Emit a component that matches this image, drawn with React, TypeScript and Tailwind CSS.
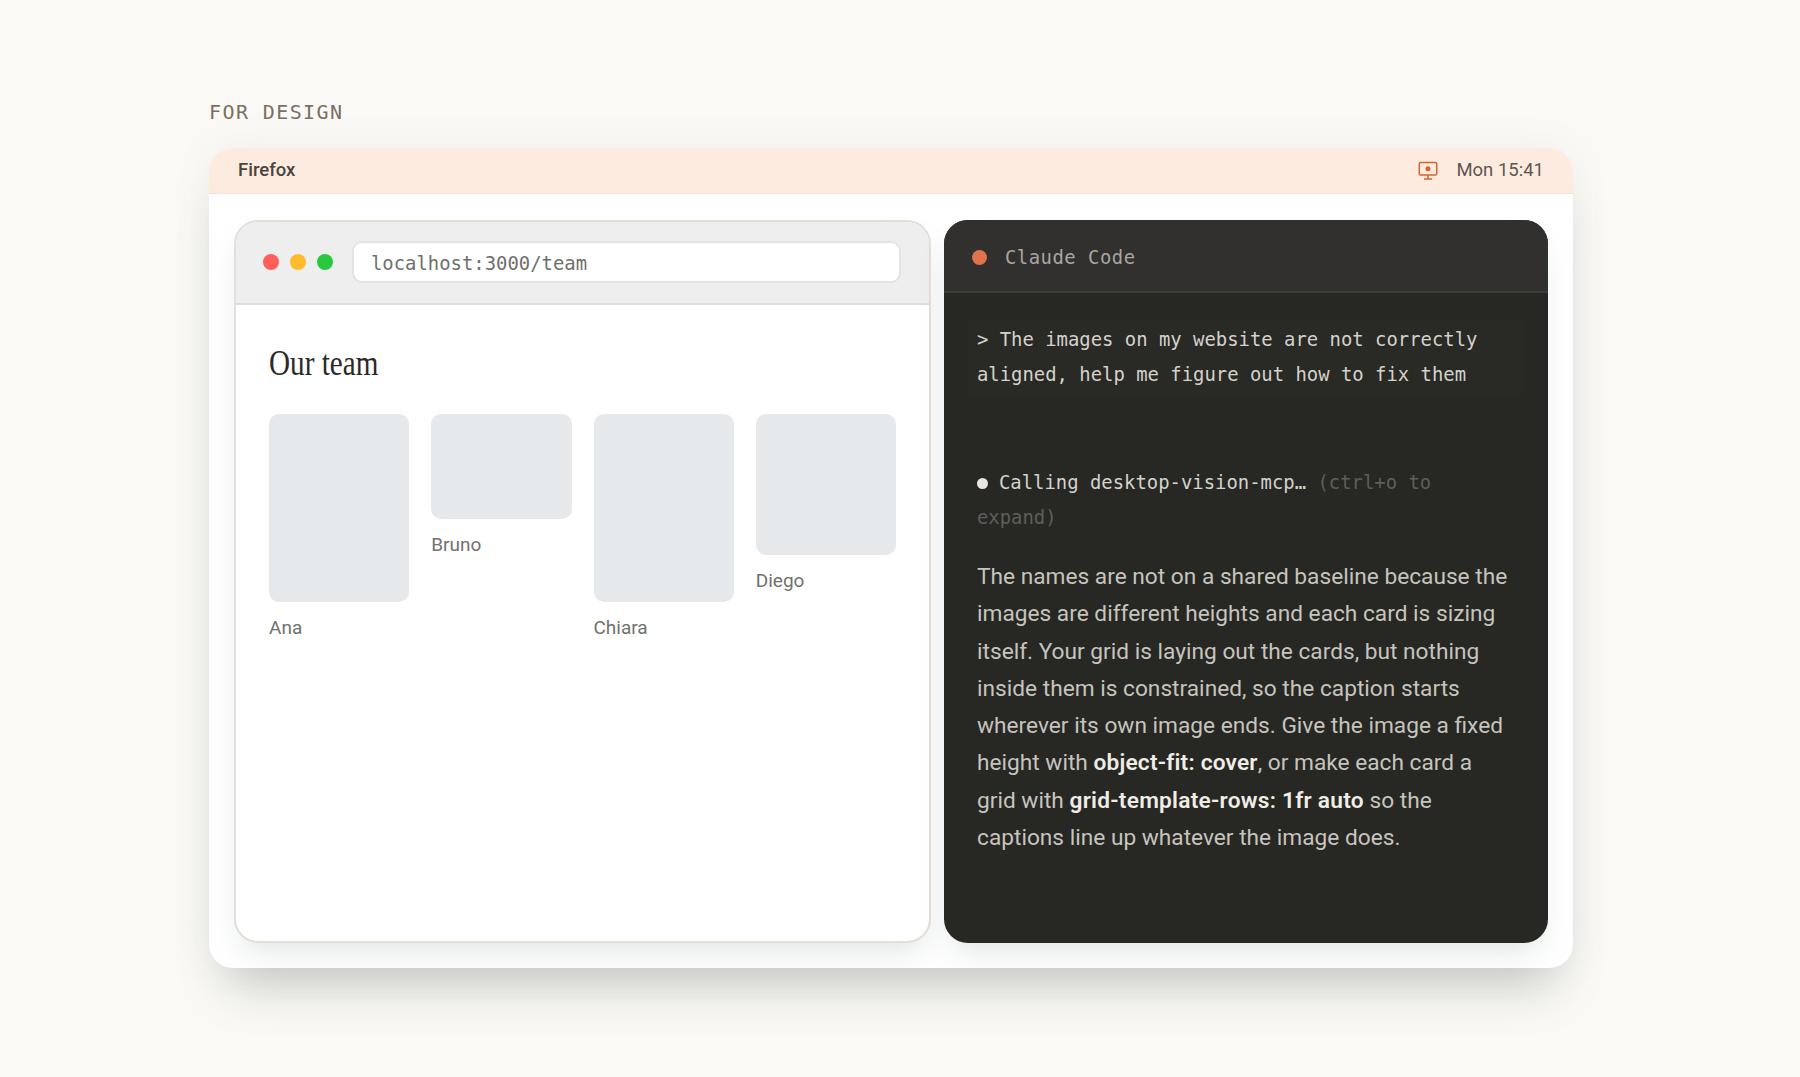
import React from 'react';

const mono = "font-['DejaVu_Sans_Mono','Liberation_Mono',monospace]";

const people = [
  { name: 'Ana', imageHeight: 'h-[188px]' },
  { name: 'Bruno', imageHeight: 'h-[105px]' },
  { name: 'Chiara', imageHeight: 'h-[188px]' },
  { name: 'Diego', imageHeight: 'h-[141px]' },
];

const ScreenShareIcon = () => (
  <svg width="20" height="20" viewBox="0 0 20 20" fill="none" stroke="#d9622b" strokeWidth="1.5">
    <rect x="1.25" y="1.5" width="17.5" height="12.5" rx="1.5" />
    <circle cx="10" cy="7.75" r="2.5" fill="#d9622b" stroke="none" />
    <path d="M10 14v3.5M6 18h8" />
  </svg>
);

const BrowserWindow = () => (
  <div className="w-[697px] rounded-[24px] border-2 border-[#e3dfd8] bg-white overflow-hidden shadow-[0_16px_30px_-8px_rgba(120,135,135,0.22)]">
    <div className="flex h-[83px] items-center border-b-2 border-[#dcdcda] bg-[#eeeeee] pb-[2px] pl-[27px] pr-[28px]">
      <div className="flex gap-[11px]">
        <span className="h-4 w-4 rounded-full bg-[#ff5f57]" />
        <span className="h-4 w-4 rounded-full bg-[#febc2e]" />
        <span className="h-4 w-4 rounded-full bg-[#28c840]" />
      </div>
      <div className={`ml-[19px] flex h-[42px] flex-1 items-center rounded-[10px] border-2 border-[#e3e3e1] bg-white pl-[17px] pt-[3px] text-[18.9px] text-[#6f6f6c] ${mono}`}>
        localhost:3000/team
      </div>
    </div>
    <div className="px-[33px] pt-[36px]">
      <h2 className="origin-left scale-x-[0.81] font-['Liberation_Serif',serif] text-[36px] leading-[44px] text-[#2a2a28]">Our team</h2>
      <div className="mt-[29px] grid grid-cols-4 items-start gap-x-[22px]">
        {people.map((person) => (
          <div key={person.name}>
            <div className={`rounded-[10px] bg-[#e6e9eb] ${person.imageHeight}`} />
            <p className="mt-[12px] font-['Roboto',sans-serif] text-[19px] leading-[28px] text-[#71716e]">{person.name}</p>
          </div>
        ))}
      </div>
    </div>
  </div>
);

const TerminalWindow = () => (
  <div className="flex w-[604px] flex-col overflow-hidden rounded-[24px] bg-[#272724] shadow-[0_16px_30px_-8px_rgba(120,135,135,0.22)]">
    <div className="flex h-[73px] shrink-0 items-center border-b-2 border-[#3d3c3a] bg-[#31302e] pl-[28px] pt-[3px]">
      <span className="h-[15px] w-[15px] rounded-full bg-[#e0734c]" />
      <span className={`ml-[18px] text-[18.9px] tracking-[0.5px] text-[#a8a6a0] ${mono}`}>Claude Code</span>
    </div>
    <div className="px-[24px] pt-[26px]">
      <div className={`rounded-[4px] bg-[#292926] px-[9px] py-[3px] text-[18.9px] leading-[35px] text-[#d4d2cb] ${mono}`}>
        &gt; The images on my website are not correctly aligned, help me figure out how to fix them
      </div>
      <div className={`mt-[70px] px-[9px] text-[18.9px] leading-[35px] text-[#d4d2cb] ${mono}`}>
        <span className="mr-[11px] inline-block h-[11px] w-[11px] rounded-full bg-[#e8e6df]" />
        Calling desktop-vision-mcp… <span className="text-[#5f5e5a]">(ctrl+o to expand)</span>
      </div>
      <p className="ml-[9px] mt-[23px] w-[532px] font-['Roboto',sans-serif] text-[22.7px] leading-[37.3px] text-[#c6c4bd]">
        The names are not on a shared baseline because the images are different heights and each card is sizing itself. Your grid is laying out the cards, but nothing inside them is constrained, so the caption starts wherever its own image ends. Give the image a fixed height with{' '}
        <strong className="font-semibold tracking-[0.2px] text-[#efede6]">object-fit: cover</strong>, or make each card a grid with{' '}
        <strong className="font-semibold tracking-[0.25px] text-[#efede6]">grid-template-rows: 1fr auto</strong> so the captions line up whatever the image does.
      </p>
    </div>
  </div>
);

export default function App() {
  return (
    <div className="min-h-[1077px] bg-[#faf9f6] pl-[209px] pt-[98px]">
      <p className={`text-[20px] leading-[28px] tracking-[1.4px] text-[#7a6f62] ${mono}`}>FOR DESIGN</p>
      <div className="mt-[22px] w-[1364px] overflow-hidden rounded-[24px] bg-white shadow-[0_0_40px_rgba(120,120,105,0.07),0_36px_50px_-20px_rgba(90,100,90,0.32)]">
        <div className="flex h-[46px] items-center justify-between border-b border-[#f3dfd0] bg-[#feebe0] px-[29px] font-['Roboto',sans-serif] text-[18.5px]">
          <span className="font-medium text-[#4a443e]">Firefox</span>
          <div className="flex items-center gap-[18px] text-[#5c5650]">
            <ScreenShareIcon />
            <span>Mon 15:41</span>
          </div>
        </div>
        <div className="flex h-[774px] gap-[13px] px-[25px] pb-[25px] pt-[26px]">
          <BrowserWindow />
          <TerminalWindow />
        </div>
      </div>
    </div>
  );
}
